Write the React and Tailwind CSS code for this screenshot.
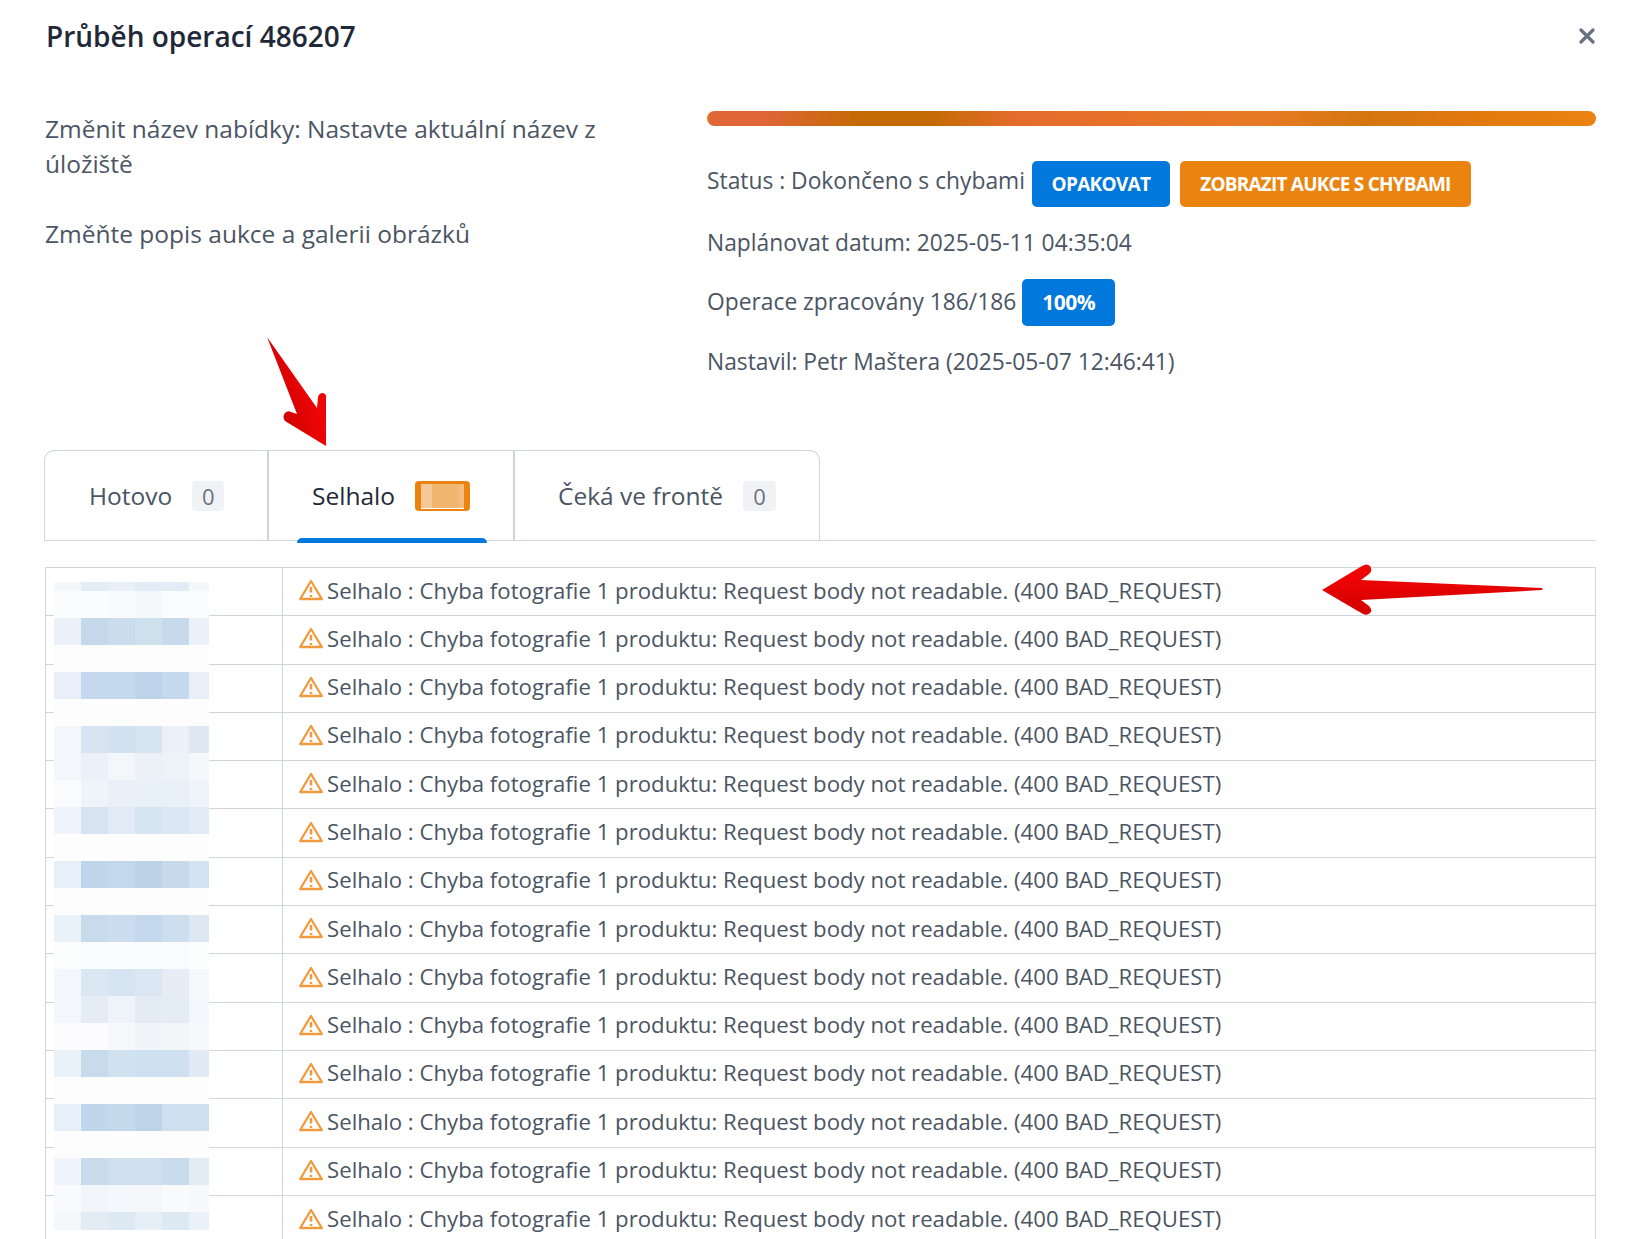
const font = "font-['Open_Sans','Noto_Sans',sans-serif]"

// pixelated area over the first column, one line per 27px band
const BLUR_ROWS = [
	[9, ['#f4f8fb', '#e3edf6', '#e9f0f8', '#e1ecf6', '#e1ecf6', '#f4f8fb']],
	[27, ['#fbfcfe', '#fbfcfe', '#f9fafc', '#f5f8fb', '#fbfcfe', '#fbfcfe']],
	[27, ['#eaf1f9', '#c5d9ed', '#cbddec', '#d0e1ee', '#c6daec', '#eaf1f9']],
	[27, ['#fdfdfe', '#fdfdfe', '#fdfdfe', '#fdfdfe', '#fdfdfe', '#fdfdfe']],
	[27, ['#e8eff8', '#c5d9ee', '#c5d9ee', '#bdd3e9', '#c5d9ee', '#e8eff8']],
	[27, ['#fdfdfe', '#fdfdfe', '#fdfdfe', '#fdfdfe', '#fdfdfe', '#fdfdfe']],
	[27, ['#f3f7fb', '#d8e4f1', '#d3e2f0', '#d6e3f1', '#ebf1f7', '#dfe9f4']],
	[27, ['#f3f7fb', '#ebf1f8', '#f3f7fa', '#ebf1f7', '#edf2f8', '#f4f8fa']],
	[27, ['#fafbfd', '#eff4fa', '#e9f0f8', '#e8f0f8', '#e8f0f8', '#eff3fa']],
	[27, ['#eff4fc', '#d6e4f2', '#e0ebf5', '#d4e4f1', '#dbe7f3', '#e0ebf5']],
	[27, ['#fdfdfe', '#fdfdfe', '#fdfdfe', '#fdfdfe', '#fdfdfe', '#fdfdfe']],
	[27, ['#e7eff8', '#bfd5ea', '#c3d8ec', '#bbd2e7', '#c6daec', '#d3e3f1']],
	[27, ['#fdfdfe', '#fdfdfe', '#fdfdfe', '#fdfdfe', '#fdfdfe', '#fdfdfe']],
	[27, ['#e9f1f9', '#c8dbed', '#cbddee', '#c5d9ee', '#cddeee', '#dde8f3']],
	[27, ['#fcfdfd', '#fafbfd', '#fbfcfe', '#fbfcfe', '#fafbfd', '#fcfdfd']],
	[27, ['#f3f6fc', '#dae6f2', '#d6e3f0', '#dae6f2', '#e6edf6', '#f6f8fc']],
	[27, ['#f3f6fb', '#e4edf6', '#eff4fa', '#e3ecf5', '#e4edf6', '#f4f7fb']],
	[27, ['#fcfcfe', '#fcfcfe', '#f6f8fb', '#f1f5fa', '#f3f6f9', '#f6f8fc']],
	[27, ['#e9f1f9', '#c7dbed', '#d0e1f0', '#cfe0f0', '#cfe0f0', '#e1e9f5']],
	[27, ['#fdfdfe', '#fdfdfe', '#fdfdfe', '#fdfdfe', '#fdfdfe', '#fdfdfe']],
	[27, ['#e7eff8', '#c0d6ea', '#c4d9ec', '#bdd4e8', '#cee0ef', '#cee0ef']],
	[27, ['#fdfdfe', '#fdfdfe', '#fdfdfe', '#fdfdfe', '#fdfdfe', '#fdfdfe']],
	[27, ['#f0f4fc', '#c8dcec', '#cfdfee', '#cfdfee', '#c9dced', '#e3ecf5']],
	[27, ['#f9fafd', '#f2f5fa', '#f4f7fb', '#f4f6fa', '#f8fafc', '#f8f9fc']],
	[18, ['#f5f8fb', '#e3ecf5', '#deeaf3', '#e6eff7', '#dde9f3', '#ebf1f8']],
]

function WarnIcon() {
	return (
		<svg viewBox="0 0 24 22" className="w-[24px] h-[22px] shrink-0" fill="none" stroke="#f09a3e" strokeWidth="2.3" strokeLinejoin="round" strokeLinecap="round">
			<path d="M12 2 L22.8 20 H1.2 Z" />
			<path d="M12 8 V13.5" strokeWidth="2.6" strokeLinecap="butt" />
			<path d="M12 16 V18" strokeWidth="2.6" strokeLinecap="butt" />
		</svg>
	)
}

function Counter({ width, children }) {
	return <span className={`ml-[20px] ${width} h-[30px] pt-[2px] rounded-[4px] bg-[#f1f2f6] flex items-center justify-center text-[22px] text-[#6b7280]`}>{children}</span>
}

function Row() {
	return (
		<div className="flex h-[48.3px] border-b border-[#d1d5db] last:border-b-0">
			<div className="w-[237px] shrink-0 border-r border-[#d1d5db]"></div>
			<div className="flex items-center pl-[16px] pb-[3px] text-[22.2px] text-[#4b5563] whitespace-nowrap">
				<WarnIcon />
				<span className="ml-[4px]">Selhalo : Chyba fotografie 1 produktu: Request body not readable. (400 BAD_REQUEST)</span>
			</div>
		</div>
	)
}

export default function App() {
	return (
		<div className={`relative h-screen overflow-hidden bg-white ${font}`}>
			<div className="flex justify-between items-center pl-[46px] pr-[44px] pt-[17px] h-[55px]">
				<h1 className="text-[28px] font-semibold text-[#1f2937]">Průběh operací 486207</h1>
				<svg viewBox="0 0 16 16" className="w-[16px] h-[16px]" stroke="#667280" strokeWidth="3.2" strokeLinecap="round">
					<path d="M2 2 L14 14 M14 2 L2 14" />
				</svg>
			</div>

			<div className="flex pl-[45px] pr-[43px] pt-[56px]">
				<div className="w-[662px] shrink-0 text-[24.5px] leading-[35px] text-[#4b5563]">
					<p className="w-[570px]">Změnit název nabídky: Nastavte aktuální název z úložiště</p>
					<p className="mt-[35px]">Změňte popis aukce a galerii obrázků</p>
				</div>
				<div className="flex-1 text-[22.8px] text-[#4b5563]">
					<div className="h-[15px] rounded-full bg-[linear-gradient(90deg,#ea8310_0,#e0663a_3px,#e0663a_6%,#c46a05_17%,#c46a05_25%,#e46c2c_35%,#e87a25_62%,#d4760f_74%,#e0780f_85%,#ea8310_100%)]"></div>
					<div className="flex items-center mt-[35px] h-[46px] whitespace-nowrap">
						<span className="mb-[6px]">Status : Dokončeno s chybami</span>
						<button className="ml-[7px] w-[138px] h-[46px] rounded-[5px] bg-[#0078dc] text-white text-[19px] font-bold tracking-[-0.7px]">OPAKOVAT</button>
						<button className="ml-[10px] w-[291px] h-[46px] rounded-[5px] bg-[#eb840f] text-white text-[19px] font-bold tracking-[-0.8px]">ZOBRAZIT AUKCE S CHYBAMI</button>
					</div>
					<p className="mt-[14px] h-[44px] leading-[44px]">Naplánovat datum: 2025-05-11 04:35:04</p>
					<div className="flex items-center mt-[14px] h-[47px] whitespace-nowrap">
						<span>Operace zpracovány 186/186</span>
						<span className="ml-[6px] w-[93px] h-[47px] rounded-[5px] bg-[#0078dc] text-white text-[21px] font-bold tracking-[-0.5px] flex items-center justify-center">100%</span>
					</div>
					<p className="mt-[14px] h-[44px] leading-[44px]">Nastavil: Petr Maštera (2025-05-07 12:46:41)</p>
				</div>
			</div>

			<div className="mt-[66px] ml-[44px] mr-[43px] border-b border-[#d1d5db] h-[91px]">
				<div className="flex w-fit h-[90px] border border-b-0 border-[#d1d5db] rounded-t-[10px] text-[24.5px] text-[#4b5563]">
					<div className="w-[222px] flex items-center pl-[44px]">
						<span className="pt-[2px]">Hotovo</span>
						<Counter width="w-[32px]">0</Counter>
					</div>
					<div className="relative w-[246px] flex items-center pl-[43px] border-l-2 border-[#d1d5db] text-[#1f2937]">
						<span className="pt-[2px]">Selhalo</span>
						<span className="ml-[20px] w-[55px] h-[30px] rounded-[4px] bg-[#eb840f] pl-[6px] pr-[6px] pt-[3px] pb-[2px] flex">
							<span className="flex flex-1 border-b border-white">
								<span className="w-[11px] bg-[#f6c898]"></span>
								<span className="flex-1 bg-[#f3b670]"></span>
								<span className="w-[5px] bg-[#f4bd80]"></span>
							</span>
						</span>
						<span className="absolute left-[28px] -bottom-[3px] w-[190px] h-[5px] rounded-t-[5px] bg-[#0078dc]"></span>
					</div>
					<div className="w-[306px] flex items-center pl-[43px] border-l-2 border-[#d1d5db]">
						<span className="pt-[2px]">Čeká ve frontě</span>
						<Counter width="w-[33px]">0</Counter>
					</div>
				</div>
			</div>

			<div className="mt-[26px] ml-[45px] mr-[43px] border border-b-0 border-[#d1d5db]">
				{Array.from({ length: 14 }).map((_, i) => <Row key={i} />)}
			</div>

			{/* pixelated product names */}
			<div className="absolute left-[54px] top-[582px] w-[155px]">
				{BLUR_ROWS.map(([height, cells], i) => (
					<div key={i} className="grid grid-cols-[27px_27px_27px_27px_27px_20px]" style={{ height }}>
						{cells.map((color, j) => <div key={j} style={{ backgroundColor: color }}></div>)}
					</div>
				))}
			</div>

			{/* red annotation arrows */}
			<svg className="absolute left-0 top-0 w-[1639px] h-[1239px] pointer-events-none" viewBox="0 0 1639 1239">
				<defs>
					<linearGradient id="redDown" x1="0" y1="1" x2="1" y2="0.4">
						<stop offset="0.2" stopColor="#c80000" />
						<stop offset="0.8" stopColor="#f00505" />
					</linearGradient>
					<linearGradient id="redLeft" x1="0" y1="0" x2="0" y2="1">
						<stop offset="0.2" stopColor="#f00505" />
						<stop offset="0.8" stopColor="#d80000" />
					</linearGradient>
				</defs>
				<path d="M267 337 L317 408 L318 397 Q319 393 323 393 Q327 394 326 399 L326 446 L285 421 Q282 417 285 413 Q288 410 291 412 L297 414 Z" fill="url(#redDown)" />
				<path d="M1322 590 L1362 566 Q1367 563 1370 566 Q1373 571 1369 574 L1361 580 L1542 588 Q1543 589 1542 590 L1361 600 L1369 606 Q1373 610 1370 613 Q1367 616 1363 614 Z" fill="url(#redLeft)" />
			</svg>
		</div>
	)
}
